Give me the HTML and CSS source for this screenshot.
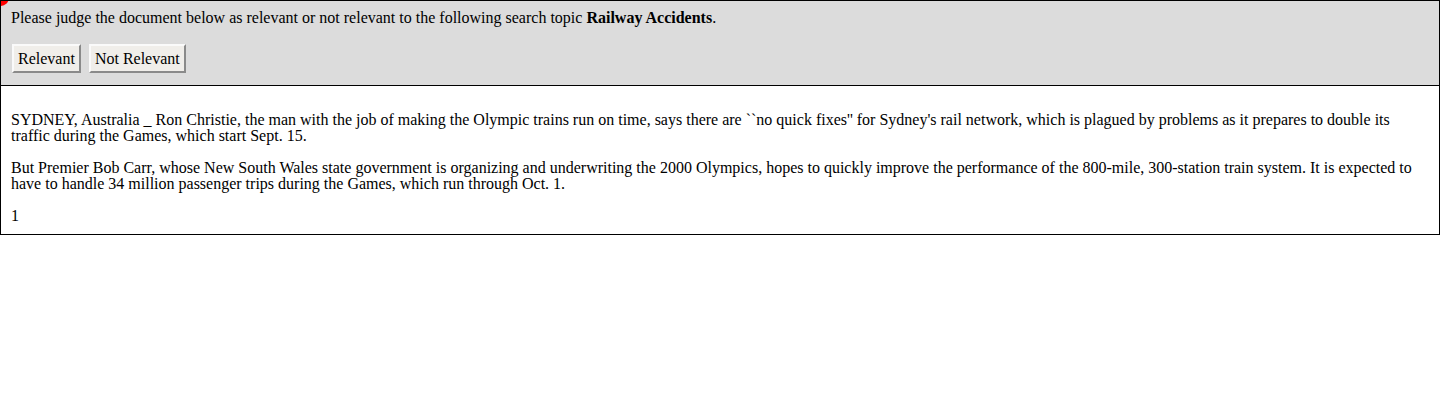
FILE: index.html
```html
<!DOCTYPE html>
<html>
<head>
<meta charset="utf-8">
<link rel="stylesheet" href="styles.css">
</head>
<body>
<div class="frame">
  <span class="dot"></span>
  <div class="judge">
    <div class="prompt">Please judge the document below as relevant or not relevant to the following search topic <b>Railway Accidents</b>.</div>
    <div class="actions">
      <button class="btn">Relevant</button>
      <button class="btn">Not Relevant</button>
    </div>
  </div>
  <div class="doc">
    <p>SYDNEY, Australia _ Ron Christie, the man with the job of making the Olympic trains run on time, says there are ``no quick fixes'' for Sydney's rail network, which is plagued by problems as it prepares to double its traffic during the Games, which start Sept. 15.</p>
    <p>But Premier Bob Carr, whose New South Wales state government is organizing and underwriting the 2000 Olympics, hopes to quickly improve the performance of the 800-mile, 300-station train system. It is expected to have to handle 34 million passenger trips during the Games, which run through Oct. 1.</p>
    <p class="page">1</p>
  </div>
</div>
</body>
</html>
```
FILE: styles.css
```css
html, body {
  margin: 0;
  padding: 0;
  background: #fff;
}
body {
  font-family: "Liberation Serif", "Times New Roman", serif;
  font-size: 16px;
  line-height: 16px;
  color: #000;
}
.frame {
  position: relative;
  width: 1440px;
  box-sizing: border-box;
  border: 1px solid #000;
  overflow: hidden;
}
.dot {
  position: absolute;
  left: -9px;
  top: -12px;
  width: 17px;
  height: 17px;
  border-radius: 50%;
  background: #f00;
}
.judge {
  background: #dcdcdc;
  border-bottom: 1px solid #000;
  padding: 9px 10px 12px;
}
.actions {
  display: flex;
  gap: 8px;
  margin-top: 18px;
  padding-left: 1px;
}
.btn {
  font-family: "Liberation Serif", "Times New Roman", serif;
  font-size: 16px;
  line-height: 16px;
  color: #000;
  background: #f0eeea;
  border: 2px solid;
  border-color: #fafafa #8a8a8a #8a8a8a #fafafa;
  padding: 4px 4px;
  margin: 0;
  height: 29px;
}
.doc {
  padding: 10px 10px 10px;
}
.doc p {
  margin: 16px 0;
}
.doc p.page {
  margin-bottom: 0;
}
```
